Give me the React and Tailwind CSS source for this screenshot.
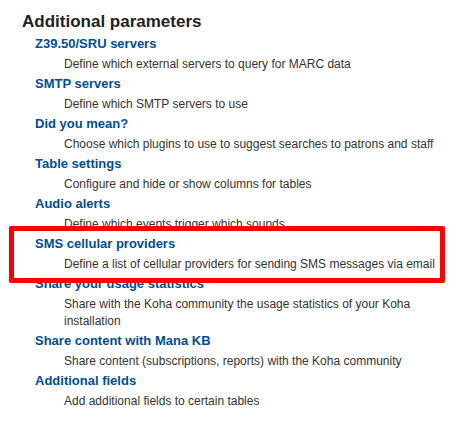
import React from "react";

const items = [
  ["Z39.50/SRU servers", "Define which external servers to query for MARC data"],
  ["SMTP servers", "Define which SMTP servers to use"],
  ["Did you mean?", "Choose which plugins to use to suggest searches to patrons and staff"],
  ["Table settings", "Configure and hide or show columns for tables"],
  ["Audio alerts", "Define which events trigger which sounds"],
  ["SMS cellular providers", "Define a list of cellular providers for sending SMS messages via email"],
  ["Share your usage statistics", "Share with the Koha community the usage statistics of your Koha installation"],
  ["Share content with Mana KB", "Share content (subscriptions, reports) with the Koha community"],
  ["Additional fields", "Add additional fields to certain tables"],
];

export default function App() {
  return (
    <div
      className="relative w-[459px] h-[431px] bg-white overflow-hidden"
      style={{ fontFamily: '"Liberation Sans", Arial, sans-serif' }}
    >
      <div className="pl-[22px] pt-[11px]">
        <h3 className="text-[17px] leading-[22px] font-bold text-[#222]">Additional parameters</h3>
        <dl className="pl-[13px] pt-[1px]">
          {items.map(([t, d]) => (
            <div key={t}>
              <dt className="text-[13px] leading-[20px] font-bold text-[#004d99]">{t}</dt>
              <dd className="pl-[29px] pr-[4px] text-[12px] leading-[17px] pt-[2px] pb-[1px] text-[#333]">{d}</dd>
            </div>
          ))}
        </dl>
      </div>
      <div className="absolute left-[9px] top-[226px] w-[436px] h-[57px] border-[5px] border-[#ff0000] rounded-[2px]" />
    </div>
  );
}
